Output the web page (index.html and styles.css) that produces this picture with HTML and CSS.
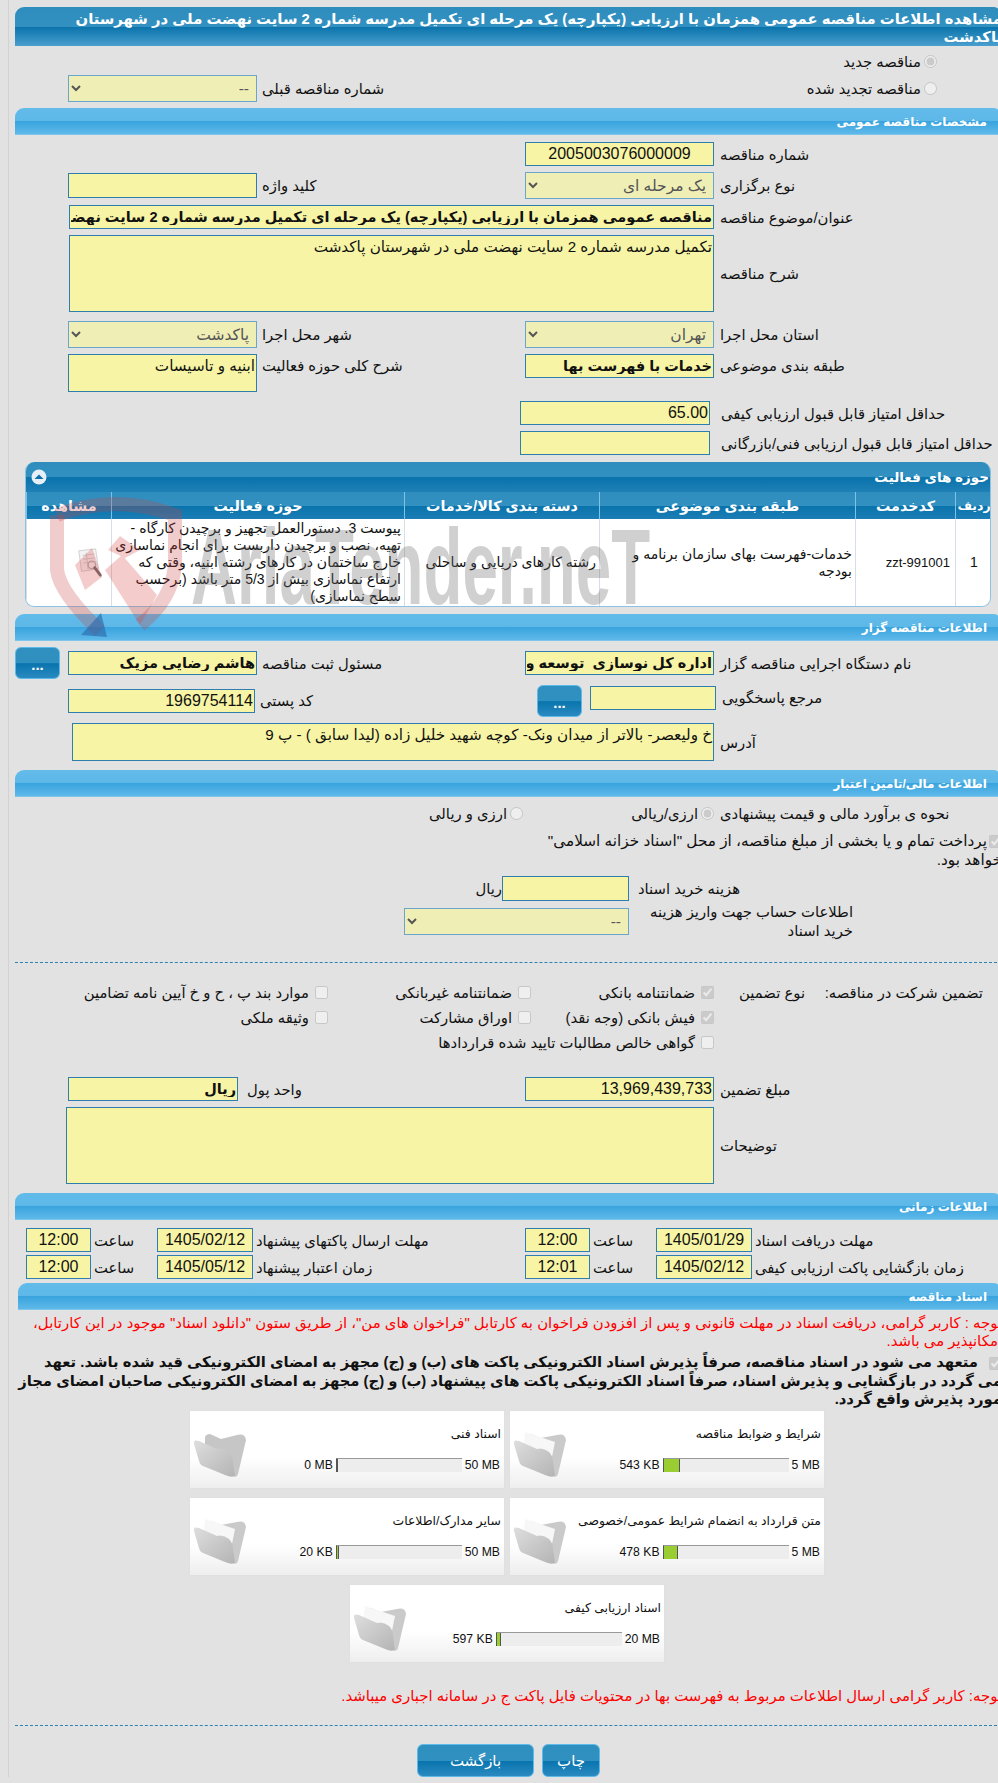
FILE: index.html
```html
<!DOCTYPE html>
<html lang="fa">
<head>
<meta charset="utf-8">
<title>مشاهده اطلاعات مناقصه</title>
<link rel="stylesheet" href="styles.css">
</head>
<body>
<div class="frame">
<main class="page">
  <h1 class="title" dir="rtl">مشاهده اطلاعات مناقصه عمومی همزمان با ارزیابی (یکپارچه) یک مرحله ای تکمیل مدرسه شماره 2 سایت نهضت ملی در شهرستان پاکدشت</h1>

  <div class="row radios">
    <div class="half-l"></div>
    <div class="half-r radio-cell" dir="rtl"><input type="radio" name="t" checked disabled><span>مناقصه جدید</span></div>
  </div>
  <div class="row radios2">
    <div class="half-l"><select class="f w189 sel" disabled dir="rtl"><option>--</option></select><label dir="rtl">شماره مناقصه قبلی</label></div>
    <div class="half-r radio-cell" dir="rtl"><input type="radio" name="t" disabled><span>مناقصه تجدید شده</span></div>
  </div>

  <h2 class="sec sec1" dir="rtl">مشخصات مناقصه عمومی</h2>

  <div class="row"><div class="half-l"></div><div class="half-r"><input class="f w189 num mid" readonly dir="rtl" value="2005003076000009"><label dir="rtl">شماره مناقصه</label></div></div>
  <div class="row">
    <div class="half-l"><input class="f w189 h25" readonly><label dir="rtl">کلید واژه</label></div>
    <div class="half-r"><select class="f w189 sel" disabled dir="rtl"><option>یک مرحله ای</option></select><label dir="rtl">نوع برگزاری</label></div>
  </div>
  <div class="row"><div class="half-wide"><input class="f w645 bold" readonly dir="rtl" value="مناقصه عمومی همزمان با ارزیابی (یکپارچه) یک مرحله ای تکمیل مدرسه شماره 2 سایت نهضت ملی در شهرستان پاکدشت"><label dir="rtl">عنوان/موضوع مناقصه</label></div></div>
  <div class="row"><div class="half-wide"><textarea class="f w645 ta77" readonly dir="rtl">تکمیل مدرسه شماره 2 سایت نهضت ملی در شهرستان پاکدشت</textarea><label dir="rtl">شرح مناقصه</label></div></div>
  <div class="row mt9">
    <div class="half-l"><select class="f w189 sel" disabled dir="rtl"><option>پاکدشت</option></select><label dir="rtl">شهر محل اجرا</label></div>
    <div class="half-r"><select class="f w189 sel" disabled dir="rtl"><option>تهران</option></select><label dir="rtl">استان محل اجرا</label></div>
  </div>
  <div class="row top">
    <div class="half-l"><textarea class="f w189 ta38" readonly dir="rtl">ابنیه و تاسیسات</textarea><label class="lab-top" dir="rtl">شرح کلی حوزه فعالیت</label></div>
    <div class="half-r"><input class="f w189 bold" readonly dir="rtl" value="خدمات با فهرست بها"><label class="lab-top" dir="rtl">طبقه بندی موضوعی</label></div>
  </div>
  <div class="row mt9"><div class="half-l"></div><div class="half-r"><input class="f w190 shift num" readonly dir="rtl" value="65.00"><label dir="rtl">حداقل امتیاز قابل قبول ارزیابی کیفی</label></div></div>
  <div class="row"><div class="half-l"></div><div class="half-r"><input class="f w190 shift" readonly><label dir="rtl">حداقل امتیاز قابل قبول ارزیابی فنی/بازرگانی</label></div></div>

  <section class="panel">
    <div class="panel-head" dir="rtl"><span>حوزه های فعالیت</span>
      <svg class="collapse" viewBox="0 0 16 16" width="16" height="16"><circle cx="8" cy="8" r="7.5" fill="#e6eef8"/><path d="M3.5 10 L8 5.5 L12.5 10 Z" fill="#0f6ea6"/></svg>
    </div>
    <table class="grid" dir="rtl">
      <colgroup><col class="c1"><col class="c2"><col class="c3"><col class="c4"><col class="c5"><col class="c6"></colgroup>
      <thead><tr><th>ردیف</th><th>کدخدمت</th><th>طبقه بندی موضوعی</th><th>دسته بندی کالا/خدمات</th><th>حوزه فعالیت</th><th>مشاهده</th></tr></thead>
      <tbody><tr>
        <td class="ctr">1</td>
        <td class="code" dir="ltr">zzt-991001</td>
        <td>خدمات-فهرست بهای سازمان برنامه و بودجه</td>
        <td>رشته کارهای دریایی و ساحلی</td>
        <td>پیوست 3. دستورالعمل تجهیز و برچیدن کارگاه - تهیه، نصب و برچیدن داربست برای انجام نماسازی خارج ساختمان در کارهای رشته ابنیه، وقتی که ارتفاع نماسازی بیش از 5/3 متر باشد (برحسب سطح نماسازی)</td>
        <td class="ctr">
          <svg class="view" viewBox="0 0 32 32" width="30" height="30"><path d="M4 3 L22 1 L25 22 L7 25 Z" fill="#f2f2f2" stroke="#c8c8c8"/><path d="M8 8 L21 6.5 M8.5 12 L21.5 10.5 M9 16 L22 14.5 M12 5 L14 23" stroke="#c4c4c4" fill="none"/><circle cx="18" cy="18" r="4" fill="none" stroke="#a8a8a8" stroke-width="1.5"/><path d="M21 21 L27 29" stroke="#555" stroke-width="3" stroke-linecap="round"/></svg>
        </td>
      </tr></tbody>
    </table>
  </section>

  <h2 class="sec sec2" dir="rtl">اطلاعات مناقصه گزار</h2>
  <div class="row center-row org">
    <div class="half-l btn-l"><button class="btn dots" type="button">...</button><input class="f w189 bold" readonly dir="rtl" value="هاشم رضایی مزیک"><label dir="rtl">مسئول ثبت مناقصه</label></div>
    <div class="half-r"><input class="f w189 bold" readonly dir="rtl" value="اداره کل نوسازی  توسعه و تجهیز مدارس"><label dir="rtl">نام دستگاه اجرایی مناقصه گزار</label></div>
  </div>
  <div class="row top org2">
    <div class="half-l"><input class="f w187 num zip" readonly dir="rtl" value="1969754114"><label class="lab-zip" dir="rtl">کد پستی</label></div>
    <div class="half-r ref"><button class="btn dots dots2" type="button">...</button><input class="f w126" readonly><label class="lab-ref" dir="rtl">مرجع پاسخگویی</label></div>
  </div>
  <div class="row"><div class="half-addr"><textarea class="f w642 ta38" readonly dir="rtl">خ ولیعصر- بالاتر از میدان ونک- کوچه شهید خلیل زاده (لیدا سابق ) - پ 9</textarea><label dir="rtl">آدرس</label></div></div>

  <h2 class="sec sec3" dir="rtl">اطلاعات مالی/تامین اعتبار</h2>
  <div class="row fin-radio">
    <div class="half-l radio2" dir="rtl"><input type="radio" name="c" disabled><span>ارزی و ریالی</span></div>
    <div class="half-r"><div class="w189 radio3" dir="rtl"><input type="radio" name="c" checked disabled><span>ارزی/ریالی</span></div><label dir="rtl">نحوه ی برآورد مالی و قیمت پیشنهادی</label></div>
  </div>
  <p class="treasury" dir="rtl"><input type="checkbox" checked disabled>پرداخت تمام و یا بخشی از مبلغ مناقصه، از محل "اسناد خزانه اسلامی" خواهد بود.</p>
  <div class="fin">
    <div class="fin-f"><span dir="rtl">ریال</span><input class="f w127 h25" readonly></div>
    <label dir="rtl">هزینه خرید اسناد</label>
  </div>
  <div class="fin fin2">
    <div class="fin-f"><select class="f wfull sel" disabled dir="rtl"><option>--</option></select></div>
    <label class="fin-lab" dir="rtl">اطلاعات حساب جهت واریز هزینه خرید اسناد</label>
  </div>
  <hr class="dash dash1">

  <div class="guar" dir="rtl">
    <div class="g-head"><span class="g-a">تضمین شرکت در مناقصه:</span><span class="g-b">نوع تضمین</span></div>
    <label class="chk"><input type="checkbox" checked disabled>ضمانتنامه بانکی</label>
    <label class="chk"><input type="checkbox" disabled>ضمانتنامه غیربانکی</label>
    <label class="chk"><input type="checkbox" disabled>موارد بند پ ، ح و خ آیین نامه تضامین</label>
    <div></div>
    <label class="chk"><input type="checkbox" checked disabled>فیش بانکی (وجه نقد)</label>
    <label class="chk"><input type="checkbox" disabled>اوراق مشارکت</label>
    <label class="chk"><input type="checkbox" disabled>وثیقه ملکی</label>
    <div></div>
    <label class="chk span3"><input type="checkbox" disabled>گواهی خالص مطالبات تایید شده قراردادها</label>
  </div>

  <div class="row amount">
    <div class="half-l"><input class="f w170 bold" readonly dir="rtl" value="ریال"><label class="near" dir="rtl">واحد پول</label></div>
    <div class="half-r"><input class="f w189 num" readonly dir="rtl" value="13,969,439,733"><label dir="rtl">مبلغ تضمین</label></div>
  </div>
  <div class="row"><div class="half-desc"><textarea class="f w648 ta77" readonly dir="rtl"></textarea><label dir="rtl">توضیحات</label></div></div>

  <h2 class="sec sec4" dir="rtl">اطلاعات زمانی</h2>
  <div class="row time t1">
    <div class="half-l tl"><input class="f tm num" readonly dir="rtl" value="12:00"><label class="sa" dir="rtl">ساعت</label><input class="f dt num" readonly dir="rtl" value="1405/02/12"><label dir="rtl">مهلت ارسال پاکتهای پیشنهاد</label></div>
    <div class="half-r tr"><input class="f tm num" readonly dir="rtl" value="12:00"><label class="sa" dir="rtl">ساعت</label><input class="f dt num" readonly dir="rtl" value="1405/01/29"><label dir="rtl">مهلت دریافت اسناد</label></div>
  </div>
  <div class="row time t2">
    <div class="half-l tl"><input class="f tm num" readonly dir="rtl" value="12:00"><label class="sa" dir="rtl">ساعت</label><input class="f dt num" readonly dir="rtl" value="1405/05/12"><label dir="rtl">زمان اعتبار پیشنهاد</label></div>
    <div class="half-r tr"><input class="f tm num" readonly dir="rtl" value="12:01"><label class="sa" dir="rtl">ساعت</label><input class="f dt num" readonly dir="rtl" value="1405/02/12"><label dir="rtl">زمان بازگشایی پاکت ارزیابی کیفی</label></div>
  </div>

  <h2 class="sec sec5" dir="rtl">اسناد مناقصه</h2>
  <p class="red" dir="rtl">توجه : کاربر گرامی، دریافت اسناد در مهلت قانونی و پس از افزودن فراخوان به کارتابل "فراخوان های من"، از طریق ستون "دانلود اسناد" موجود در این کارتابل، امکانپذیر می باشد.</p>
  <p class="pledge" dir="rtl"><input type="checkbox" checked disabled>متعهد می شود در اسناد مناقصه، صرفاً پذیرش اسناد الکترونیکی پاکت های (ب) و (ج) مجهز به امضای الکترونیکی قید شده باشد. تعهد می گردد در بازگشایی و پذیرش اسناد، صرفاً اسناد الکترونیکی پاکت های پیشنهاد (ب) و (ج) مجهز به امضای الکترونیکی صاحبان امضای مجاز مورد پذیرش واقع گردد.</p>

  <div class="cards" dir="rtl">
    <article class="card">
      <h3 dir="rtl">شرایط و ضوابط مناقصه</h3>
      <div class="prog"><span>543 KB</span><div class="bar"><i style="width:15px"></i></div><span>5 MB</span></div>
      <svg class="folder" viewBox="0 0 54 50"><use href="#fold-open"/></svg>
    </article>
    <article class="card">
      <h3 dir="rtl">اسناد فنی</h3>
      <div class="prog"><span>0 MB</span><div class="bar"><i style="width:0"></i></div><span>50 MB</span></div>
      <svg class="folder" viewBox="0 0 54 50"><use href="#fold-empty"/></svg>
    </article>
    <article class="card">
      <h3 dir="rtl">متن قرارداد به انضمام شرایط عمومی/خصوصی</h3>
      <div class="prog"><span>478 KB</span><div class="bar"><i style="width:13px"></i></div><span>5 MB</span></div>
      <svg class="folder" viewBox="0 0 54 50"><use href="#fold-open"/></svg>
    </article>
    <article class="card">
      <h3 dir="rtl">سایر مدارک/اطلاعات</h3>
      <div class="prog"><span>20 KB</span><div class="bar"><i style="width:1px"></i></div><span>50 MB</span></div>
      <svg class="folder" viewBox="0 0 54 50"><use href="#fold-open"/></svg>
    </article>
    <article class="card">
      <h3 dir="rtl">اسناد ارزیابی کیفی</h3>
      <div class="prog"><span>597 KB</span><div class="bar"><i style="width:3px"></i></div><span>20 MB</span></div>
      <svg class="folder" viewBox="0 0 54 50"><use href="#fold-open"/></svg>
    </article>
  </div>

  <p class="red note" dir="rtl">توجه: کاربر گرامی ارسال اطلاعات مربوط به فهرست بها در محتویات فایل پاکت ج در سامانه اجباری میباشد.</p>
  <hr class="dash dash2">
  <div class="actions" dir="rtl">
    <button class="btn act-print" type="button">چاپ</button>
    <button class="btn act-back" type="button">بازگشت</button>
  </div>
</main>
</div>

<svg class="defs" width="0" height="0" aria-hidden="true">
  <defs>
    <linearGradient id="fg" x1="0" y1="0" x2="1" y2="1"><stop offset="0" stop-color="#dedede"/><stop offset="1" stop-color="#b4b4b4"/></linearGradient>
    <g id="fold-empty">
      <path d="M12 12 Q11 6 17 6 L28 11 L44 7 Q52 5 53 12 L45 46 Q44 50 40 48 L12 38 Z" fill="#c6c6c6"/>
      <path d="M1 16 Q0 11 6 13 L24 21 Q30 19 36 24 Q40 28 40 34 L42 48 Q38 50 32 47 L10 38 Q7 37 6 33 Z" fill="url(#fg)"/>
    </g>
    <g id="fold-open">
      <path d="M14 11 Q13 6 18 6 L28 10 L44 7 Q52 5 53 12 L45 46 Q44 50 40 48 L14 38 Z" fill="#cacaca"/>
      <path d="M12 4 L42 14 L38 34 L10 22 Z" fill="#f7f7f7"/>
      <path d="M1 16 Q0 11 6 13 L24 21 Q30 19 36 24 Q40 28 40 34 L42 48 Q38 50 32 47 L10 38 Q7 37 6 33 Z" fill="url(#fg)"/>
    </g>
  </defs>
</svg>

<div class="wm" aria-hidden="true">
  <svg class="wm-mark" viewBox="0 0 150 150" width="150" height="150">
    <path d="M17 20 Q75 -2 135 20 L135 70 Q132 105 100 130" fill="none" stroke="#c84444" stroke-opacity=".27" stroke-width="14"/>
    <path d="M17 20 L17 75 Q20 98 60 136" fill="none" stroke="#c84444" stroke-opacity=".27" stroke-width="14"/>
    <path d="M35 70 L52 53 L62 82 L45 95 Z M68 55 L80 41 L100 55 L85 63 Z M65 75 L82 60 L117 100 L100 130 Z" fill="#d84444" fill-opacity=".27"/>
    <path d="M41 140 L67 142 L61 118 Z" fill="#2a66a8" fill-opacity=".6"/>
  </svg>
  <span class="wm-text">AriaTender.neT</span>
</div>
</body>
</html>
```
FILE: styles.css
```css
html { overflow: hidden; background: #e2e2e2; }
body { margin: 0; padding-left: 8px; height: 1783px; overflow: hidden; background: #e2e2e2; position: relative;
  font-family: "Liberation Sans", "DejaVu Sans", sans-serif; font-size: 14.8px; color: #111; }
.frame { border-left: 1px solid #d2d2d2; padding-left: 6px; padding-top: 7px; }
.page { width: 987px; }
p, h1, h2, h3 { margin: 0; }

.title { height: 39px; border-radius: 9px 9px 0 0; color: #fff; font-size: 14.8px; font-weight: bold; line-height: 18px; padding: 3px 0 0 0; box-sizing: border-box; overflow: hidden;
  background: linear-gradient(#2f8dbd 0, #3291c1 50%, #0973ab 51%, #4a9fce 100%); text-align: right; }
.sec { height: 27px; border-radius: 9px 9px 0 0; color: #fff; font-size: 12px; font-weight: bold; line-height: 27px; padding-right: 15px; padding-top: 1px; box-sizing: border-box;
  background: linear-gradient(#62bbe9 0, #5eb8e8 48%, #38a3de 50%, #5fb9e9 100%); border-bottom: 1px solid #7cc6ec; }

.row { display: flex; direction: ltr; margin-top: 6px; align-items: center; }
.mt9 { margin-top: 9px; }
.top { align-items: flex-start; }
.half-l { width: 510px; padding-left: 53px; box-sizing: border-box; display: flex; gap: 5px; align-items: center; flex: none; }
.half-r { width: 477px; display: flex; gap: 6px; align-items: center; flex: none; }
.half-wide, .half-addr, .half-desc { display: flex; gap: 6px; align-items: center; padding-left: 54px; }
.half-addr { padding-left: 57px; }
.half-desc { padding-left: 51px; }
.top .half-l, .top .half-r { align-items: flex-start; }
label { white-space: nowrap; }

.f { box-sizing: border-box; height: 24px; border: 1px solid #2f7fae; background: #f7f5a5; font: inherit; font-size: 15.2px; color: #111; padding: 0 1px; margin: 0; border-radius: 0; outline: 0; flex: none; }
select.f { height: 27px; opacity: 1; background: #efeeb5; color: #555; border-color: #6aa5cc; padding: 0 3px; font-size: 15.5px; }
textarea.f { resize: none; display: block; overflow: hidden; padding: 2px 1px; }
.num { font-size: 16px; }
.mid { text-align: center; }
.bold { font-weight: bold; font-size: 14.5px; }
.w189 { width: 189px; }
.w190 { width: 190px; }
.w187 { width: 187px; }
.w170 { width: 170px; }
.w126 { width: 126px; }
.w127 { width: 127px; }
.w645 { width: 645px; }
.w642 { width: 642px; }
.w648 { width: 648px; }
.wfull { width: 225px; }
.h25 { height: 25px; }
.ta77 { height: 77px; }
.ta38 { height: 38px; }
.shift { margin-left: -5px; }
.shift + label { margin-left: 5px; }
.lab-top { line-height: 24px; }

.radios { margin-top: 6px; height: 18px; }
.radios2 { margin-top: 5px; }
.radio-cell { justify-content: flex-start; padding-right: 65px; box-sizing: border-box; gap: 3px; }
.radio-cell input, .radio2 input, .radio3 input { margin: 0; width: 13px; height: 13px; flex: none; }
.sec1 { margin-top: 6px; }
.sec1 + .row { margin-top: 7px; }

.panel { margin: 7px 11px 0 10px; height: 144px; border: 1px solid #8cc3e4; border-top: 0; border-radius: 9px; overflow: hidden; background: #fff; }
.panel-head { height: 30px; display: flex; justify-content: space-between; align-items: center; color: #fff; font-weight: bold; font-size: 13.5px; padding: 0 1px 0 5px;
  background: linear-gradient(#2f8dbd 0, #3291c1 48%, #0973ab 52%, #1f80b6 100%); }
.collapse { display: block; }
.grid { width: 100%; table-layout: fixed; border-collapse: collapse; }
.c1 { width: 37px; } .c2 { width: 100px; } .c3 { width: 256px; } .c4 { width: 195px; } .c5 { width: 293px; } .c6 { width: 85px; }
.grid th { height: 27px; padding: 0; color: #fff; font-size: 14.3px; font-weight: bold; white-space: nowrap; overflow: hidden; border-right: 1px solid #7cc3ea; border-left: 1px solid #7cc3ea;
  background: linear-gradient(#2f8dbd 0, #3291c1 50%, #0973ab 51%, #1c7db5 100%); }
.grid th:first-child { font-size: 12.5px; }
.grid td { height: 87px; padding: 0 3px; font-size: 14px; line-height: 17px; background: transparent; border-left: 1px solid #d5dfe5; border-right: 1px solid #d5dfe5; vertical-align: middle; text-align: right; }
.grid td.ctr { text-align: center; }
.grid td.code { font-size: 13px; text-align: right; padding-right: 5px; }
.view { display: block; margin: 0 3px 0 auto; opacity: .85; }

.sec2 { margin-top: 7px; }
.org { margin-top: 10px; }
.btn-l { padding-left: 0; gap: 0; }
.btn-l .f { margin-left: 8px; margin-right: 5px; }
.btn { box-sizing: border-box; border: 1px solid #5db9e8; border-radius: 6px; color: #fff; font-family: inherit; font-size: 15px; padding: 0; cursor: pointer;
  background: linear-gradient(#2f8fbf 0, #3090c0 50%, #0974ae 52%, #2a8ac0 100%); }
.dots { width: 45px; height: 32px; margin: -4px 0; flex: none; line-height: 34px; font-weight: bold; }
.org2 { margin-top: 10px; height: 28px; }
.zip { margin-top: 4px; }
.lab-zip { line-height: 24px; margin-top: 4px; }
.ref { padding-left: 12px; box-sizing: border-box; gap: 8px; }
.dots2 { margin: 0; order: 0; }
.ref .f { margin-top: 1px; margin-right: -2px; }
.lab-ref { line-height: 24px; margin-top: 1px; }
.org2 + .row { margin-top: 10px; }
.sec3 { margin-top: 9px; }

.fin-radio { margin-top: 7px; height: 18px; }
.radio2 { justify-content: flex-start; gap: 3px; flex-direction: row; direction: rtl; padding: 0 2px 0 0; }
.radio3 { display: flex; gap: 3px; align-items: center; }
.treasury { width: 462px; margin: 9px 0 0 525px; line-height: 19px; height: 38px; font-size: 15.3px; }
.treasury input { margin: 0 0 0 2px; vertical-align: middle; }
.fin { display: flex; direction: ltr; padding-left: 389px; margin-top: 7px; align-items: center; gap: 9px; }
.fin2 { margin-top: 7px; height: 27px; align-items: flex-start; }
.fin-f { width: 225px; flex: none; display: flex; justify-content: flex-end; align-items: center; }
.fin-lab { white-space: normal; width: 215px; line-height: 19px; direction: rtl; margin-top: -5px; }
.dash { border: 0; border-top: 1px dashed #2b83b5; margin: 0; }
.dash1 { margin-top: 27px; }

.guar { display: grid; grid-template-columns: 288px 183px 203px 1fr; grid-auto-rows: 25px; margin-top: 17px; align-items: center; }
.g-head { display: flex; padding-right: 19px; }
.g-a { width: 158px; white-space: nowrap; }
.g-b { padding-right: 20px; white-space: nowrap; }
.chk { display: flex; align-items: center; gap: 6px; }
.chk input { width: 13px; height: 13px; margin: 0; flex: none; }
.span3 { grid-column: 2 / span 3; }

.amount { margin-top: 22px; }
.half-l .w170 + .near { margin-left: 4px; }
.sec4 { margin-top: 9px; }

.time { margin-top: 3px; }
.t1 { margin-top: 8px; }
.tl { padding-left: 11px; gap: 0; }
.tr { gap: 0; }
.tm, .dt { text-align: center; }
.tm { width: 65px; }
.dt { width: 96px; }
.sa { width: 66px; padding-left: 3px; box-sizing: border-box; text-align: left; }
.dt + label { margin-left: 3px; }
.sec5 { margin-top: 4px; margin-left: 3px; }

.red { color: #f00; line-height: 18px; font-size: 14.9px; padding-top: 4px; margin-left: 3px; }
.pledge { font-weight: bold; font-size: 14.8px; line-height: 18.5px; margin: 3px 0 0 3px; height: 56px; }
.pledge input { margin: 0 0 0 11px; vertical-align: middle; }
.cards { display: flex; flex-wrap: wrap; justify-content: center; gap: 8px 4px; width: 640px; margin: 1px 0 0 172px; }
.card { width: 316px; height: 79px; box-sizing: border-box; border: 1px solid #e0e0e0; position: relative; background: linear-gradient(#fff 0, #fff 60%, #eeeeee 100%); padding: 15px 3px 0 0; }
.card h3 { font-size: 12.4px; font-weight: normal; line-height: 17px; text-align: right; }
.prog { direction: ltr; display: flex; justify-content: flex-end; align-items: center; gap: 3px; font-size: 12.2px; margin-top: 15px; padding-right: 1px; }
.bar { width: 126px; height: 14px; box-sizing: border-box; background: #ededed; border-top: 1px solid #999; border-left: 1px solid #555; flex: none; }
.bar i { display: block; height: 13px; background: #9acd32; border-right: 1px solid #555; }
.folder { position: absolute; left: 3px; top: 17px; width: 54px; height: 50px; }
.defs { position: absolute; }

.note { margin-top: 24px; padding-top: 0; }
.dash2 { margin-top: 20px; }
.actions { display: flex; justify-content: center; gap: 8px; margin-top: 18px; }
.act-print { width: 58px; height: 33px; }
.act-back { width: 117px; height: 33px; }

.wm { position: absolute; left: 0; top: 0; width: 700px; height: 700px; pointer-events: none; overflow: hidden; }
.wm-mark { position: absolute; left: 40px; top: 495px; }
.wm-text { position: absolute; left: 191px; top: 512px; font-family: "Liberation Sans", sans-serif; font-weight: bold; font-size: 108px; line-height: 110px; color: rgba(110,110,110,.32); white-space: nowrap; transform: scaleX(.59); transform-origin: left top; }
```
